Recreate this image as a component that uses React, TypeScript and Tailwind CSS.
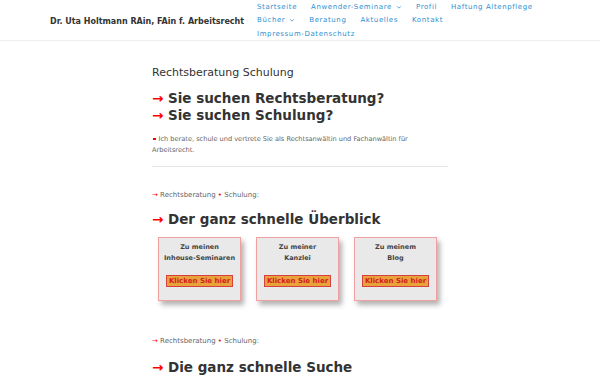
const navRows = [
  [
    { label: "Startseite" },
    { label: "Anwender-Seminare", sub: true },
    { label: "Profil" },
    { label: "Haftung Altenpflege" },
  ],
  [
    { label: "Bücher", sub: true },
    { label: "Beratung" },
    { label: "Aktuelles" },
    { label: "Kontakt" },
  ],
  [{ label: "Impressum-Datenschutz" }],
];

const cards = [
  { line1: "Zu meinen", line2: "Inhouse-Seminaren" },
  { line1: "Zu meiner", line2: "Kanzlei" },
  { line1: "Zu meinem", line2: "Blog" },
];

function Arrow() {
  return <span className="text-[#ff0000]">→</span>;
}

function Crumb() {
  return (
    <p className="text-[7px] leading-[10px] text-[#666] whitespace-nowrap">
      <span className="text-[#ff0000]">→</span> Rechtsberatung{" "}
      <span className="text-[#ff0000]">•</span> Schulung:
    </p>
  );
}

export default function App() {
  return (
    <div className="w-[600px] h-[375px] overflow-hidden bg-white font-['DejaVu_Sans',sans-serif] text-[#333]">
      {/* Header */}
      <header className="h-[41px] border-b border-[#eee] flex items-start">
        <div className="pl-[50px] pt-[7px] w-[257px] shrink-0">
          <span className="text-[8px] font-bold text-[#333] whitespace-nowrap">
            Dr. Uta Holtmann RAin, FAin f. Arbeitsrecht
          </span>
        </div>
        <nav>
          {navRows.map((row, i) => (
            <div key={i} className="flex gap-x-[14px] h-[13.5px] items-center">
              {row.map((item) => (
                <span
                  key={item.label}
                  className="text-[7px] tracking-[0.6px] text-[#2e8fd0] whitespace-nowrap flex items-center"
                >
                  {item.label}
                  {item.sub && (
                    <svg width="6" height="6" viewBox="0 0 10 10" className="ml-[4px]">
                      <path d="M2 4l3 3 3-3" fill="none" stroke="#2e8fd0" strokeWidth="1.3" />
                    </svg>
                  )}
                </span>
              ))}
            </div>
          ))}
        </nav>
      </header>

      {/* Content */}
      <main className="ml-[152px] w-[296px]">
        <h1 className="pt-[25px] text-[11px] leading-[14px] text-[#333]">Rechtsberatung Schulung</h1>
        <h2 className="mt-[10px] text-[13.5px] leading-[17px] font-bold text-[#333]">
          <Arrow /> Sie suchen Rechtsberatung?
          <br />
          <Arrow /> Sie suchen Schulung?
        </h2>
        <p className="mt-[10px] h-[22px] text-[6.6px] leading-[11px] text-[#666]">
          <span className="inline-block w-[2.5px] h-[2.5px] bg-[#ff0000] align-[1px] ml-[1px] mr-[3px]" />
          Ich berate, schule und vertrete Sie als Rechtsanwältin und Fachanwältin für Arbeitsrecht.
        </p>
        <div className="mt-[10px] h-[1px] bg-[#e6e6e6]" />

        <div className="mt-[23px]">
          <Crumb />
        </div>
        <h2 className="mt-[10px] text-[13.5px] leading-[18px] font-bold text-[#333]">
          <Arrow /> Der ganz schnelle Überblick
        </h2>

        <div className="mt-[9px] ml-[6px] flex gap-[15px]">
          {cards.map((c) => (
            <div
              key={c.line2}
              className="w-[83px] h-[64px] bg-[#e9e9e9] border border-[#f0a0a0] shadow-[3px_4px_5px_rgba(0,0,0,0.3)] flex flex-col items-center"
            >
              <p className="mt-[4px] text-[6.5px] leading-[11px] font-bold text-[#444] text-center">
                {c.line1}
                <br />
                {c.line2}
              </p>
              <span className="mt-[11px] px-[2px] bg-[#e8a23a] border border-[#d84040] text-[7px] leading-[10px] font-bold text-[#d42020] whitespace-nowrap">
                Klicken Sie hier
              </span>
            </div>
          ))}
        </div>

        <div className="mt-[35px]">
          <Crumb />
        </div>
        <h2 className="mt-[12px] text-[13.5px] leading-[18px] font-bold text-[#333]">
          <Arrow /> Die ganz schnelle Suche
        </h2>
      </main>
    </div>
  );
}
